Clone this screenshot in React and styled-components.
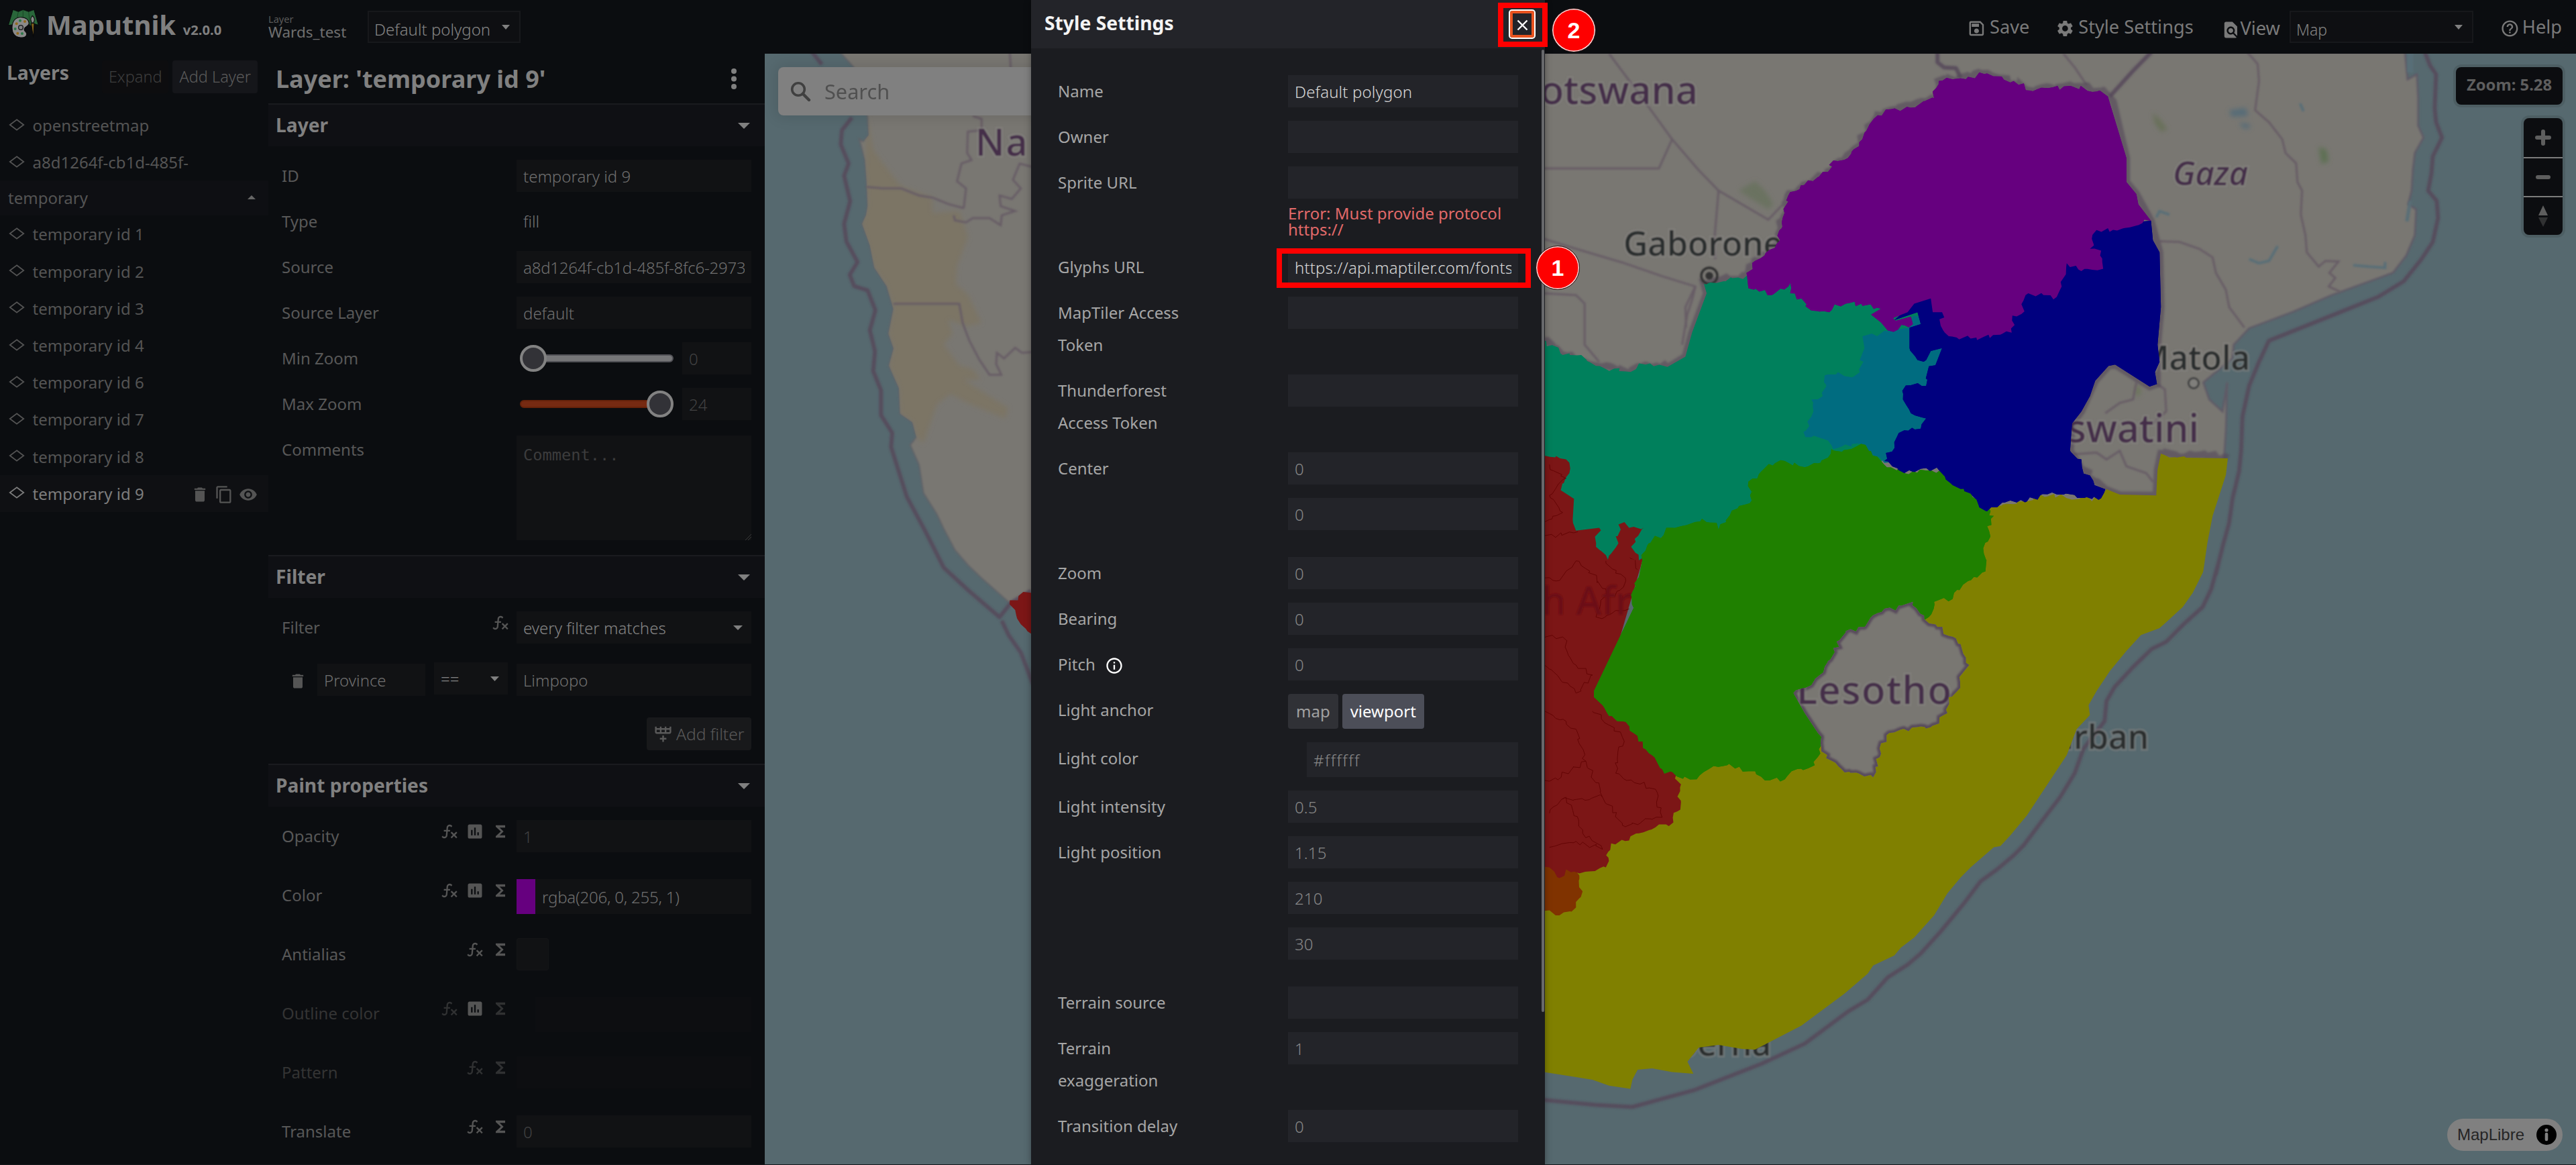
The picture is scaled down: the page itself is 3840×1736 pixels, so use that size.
import React from 'react';
import styled, { createGlobalStyle, css } from 'styled-components';
import {
  MdContentCopy,
  MdDelete,
  MdFindInPage,
  MdFunctions,
  MdHelpOutline,
  MdInfoOutline,
  MdInsertChart,
  MdOutlineSave,
  MdSettings,
  MdVisibility,
} from 'react-icons/md';

const sans = '"Noto Sans", "Open Sans", sans-serif';

const GlobalStyle = createGlobalStyle`
  * { box-sizing: border-box; }
  body { margin: 0; background: #0b0d10; overflow: hidden; font-family: ${sans}; }
  input, textarea, button { font-family: ${sans}; }
`;

/* ---------- frame ---------- */

const Shell = styled.div`
  position: relative;
  display: flex;
  flex-direction: column;
  width: 3840px;
  height: 1736px;
  overflow: hidden;
  background: #0b0d10;
  border-bottom: 1px solid #15171b;
  color: #808080;
`;

const Workspace = styled.div`
  display: flex;
  flex: 1;
  min-height: 0;
`;

/* ---------- toolbar ---------- */

const Toolbar = styled.header`
  display: flex;
  flex: 0 0 80px;
  height: 80px;
`;

const Brand = styled.div`
  display: flex;
  flex: 0 0 400px;
  align-items: flex-start;
  padding: 13px 0 0 12px;
`;

const BrandName = styled.h1`
  margin: 0 0 0 10.4px;
  font-size: 40px;
  font-weight: 700;
  line-height: 48px;
  white-space: nowrap;
`;

const Version = styled.span`
  margin-left: 10.5px;
  font-size: 20.2px;
`;

const CurrentLayer = styled.div`
  flex: 0 0 148px;
  padding-top: 19px;
  color: #6f6f6f;
  font-size: 22.5px;
  line-height: 21px;
`;

const CurrentLayerCaption = styled.div`
  color: #5a5a5a;
  font-size: 14.6px;
  line-height: 18px;
`;

const Select = styled.div`
  display: flex;
  align-items: center;
  justify-content: space-between;
  width: ${(p) => p.$width};
  height: 48px;
  margin: ${(p) => p.$margin || 0};
  padding: 0 ${(p) => p.$right || '14px'} 0 10px;
  border: ${(p) => (p.$outlined ? '2px solid #17181b' : '0')};
  padding-left: ${(p) => (p.$outlined ? '8px' : '10px')};
  background: ${(p) => (p.$outlined ? '#0e0f12' : '#111214')};
  color: #858585;
  font-size: ${(p) => p.$size || '24px'};
  font-weight: 300;
  line-height: 48px;
`;

const SelectText = styled.span`
  position: relative;
  top: ${(p) => p.$drop || '1px'};
  white-space: nowrap;
`;

const Actions = styled.nav`
  display: flex;
  align-items: flex-start;
  margin-left: auto;
  padding-right: 21px;
`;

const Action = styled.div`
  display: flex;
  align-items: center;
  height: 80px;
  margin-left: ${(p) => p.$before || 0};
  padding-top: ${(p) => p.$drop || 0};
  color: #7a7a7a;
  font-size: 27.2px;
  line-height: 40px;
  white-space: nowrap;

  svg { width: 28.8px; height: 28.8px; margin: ${(p) => p.$iconMargin || '4px 5px 0 0'}; }
`;

/* ---------- layer list ---------- */

const LayerList = styled.aside`
  flex: 0 0 400px;
`;

const ListHeader = styled.div`
  display: flex;
  align-items: flex-start;
  height: 79px;
  padding: 10px 16px 0 10px;
`;

const ListTitle = styled.h2`
  margin: -3px auto 0 0;
  font-size: 28.4px;
  font-weight: 700;
  line-height: 42px;
`;

const SmallButton = styled.button`
  height: 49px;
  margin-left: 6px;
  padding: 0 10px;
  border: 0;
  border-radius: 4px;
  background: ${(p) => (p.$quiet ? '#0d0d0f' : '#15161a')};
  color: ${(p) => (p.$quiet ? '#3e3e3e' : '#5c5c5c')};
  font-size: 23.5px;
  font-weight: 300;
  line-height: 49px;
`;

const LayerRow = styled.div`
  display: flex;
  align-items: center;
  height: 55.2px;
  padding: 0 16px 2px 13px;
  background: ${(p) => (p.$active ? '#0f1013' : 'transparent')};
  color: ${(p) => (p.$active ? '#7d7d7d' : '#545454')};
  font-size: 24px;
`;

const LayerName = styled.span`
  flex: 1;
  margin-left: 11.5px;
  padding-top: 2px;
`;

const LayerTools = styled.div`
  display: flex;
  gap: 8px;
  padding-top: 6px;
  color: #545454;

  svg { width: 28px; height: 28px; }
`;

const LayerGroup = styled.div`
  display: flex;
  align-items: center;
  justify-content: space-between;
  height: 52px;
  padding: 0 19px 2px 12px;
  background: #0e0f13;
  color: #545454;
  font-size: 24px;
`;

/* ---------- layer editor ---------- */

const Editor = styled.section`
  flex: 0 0 740px;
  overflow: hidden;
`;

const EditorHeader = styled.div`
  display: flex;
  align-items: center;
  justify-content: space-between;
  height: 74px;
  padding: 0 42px 0 11px;
`;

const EditorTitle = styled.h2`
  margin: 2px 0 0;
  font-size: 36px;
  font-weight: 700;
  line-height: 50px;
`;

const SectionHeader = styled.div`
  display: flex;
  align-items: center;
  justify-content: space-between;
  height: 64px;
  padding: 0 22px 0 11px;
  border-top: 2px solid #1a1b1f;
  background: #0f1014;
`;

const SectionTitle = styled.h3`
  margin: -3px 0 0;
  font-size: 28.2px;
  font-weight: 700;
  line-height: 40px;
`;

const SectionBody = styled.div`
  display: flex;
  flex-direction: column;
  gap: ${(p) => p.$gap || '20px'};
  padding: 20px 20px ${(p) => p.$bottom || '20px'};
`;

const Field = styled.div`
  display: flex;
  align-items: flex-start;
  height: ${(p) => p.$height || '48px'};
`;

const FieldLabel = styled.div`
  flex: 1;
  color: ${(p) => (p.$disabled ? '#343434' : '#585858')};
  font-size: 24px;
  line-height: 48px;
`;

const FieldIcons = styled.div`
  display: flex;
  gap: 10px;
  padding: 3px 10px 0 0;
  color: #555;

  svg { width: 28px; height: 28px; }
`;

const IconSlot = styled.span`
  display: flex;
  opacity: ${(p) => (p.$dim ? 0.5 : 1)};
`;

const Control = styled.div`
  display: flex;
  flex: 0 0 350px;
`;

const inputBase = css`
  border: 0;
  border-radius: 0;
  outline: 0;
  font-size: 24px;
  font-weight: 300;
  line-height: 46px;
`;

const Input = styled.input`
  ${inputBase}
  flex: ${(p) => (p.$width ? '0 0 ' + p.$width : '1')};
  width: ${(p) => p.$width || '100%'};
  min-width: 0;
  height: ${(p) => p.$height || '48px'};
  margin: ${(p) => p.$margin || 0};
  padding: 0 10px;
  background: ${(p) => (p.$faint ? '#0d0e11' : '#111214')};
  color: #707070;
  letter-spacing: ${(p) => p.$spacing || 'normal'};

  &::placeholder { color: #424243; opacity: 1; }
`;

const StaticValue = styled.div`
  padding-left: 10px;
  color: #727272;
  font-size: 24px;
  font-weight: 300;
  line-height: 47px;
`;

const Comment = styled.textarea`
  ${inputBase}
  width: 350px;
  height: 156px;
  margin-top: 3px;
  padding: 15px 10px;
  background: #111214;
  font-family: "DejaVu Sans Mono", monospace;
  font-size: 23.7px;
  font-weight: 400;
  line-height: 28px;
  resize: none;

  &::placeholder { color: #3c3c3d; opacity: 1; }
`;

const CommentBox = styled.div`
  position: relative;
  height: 159px;
`;

const ResizeGrip = styled.svg`
  position: absolute;
  right: 0;
  bottom: 0;
  width: 10px;
  height: 10px;
`;

const Slider = styled.div`
  position: relative;
  width: 229px;
  height: 48px;
  margin: 0 13px 0 5px;
  padding-top: 18px;
`;

const Track = styled.div`
  height: 12px;
  border: 2px solid ${(p) => (p.$hot ? '#66220a' : '#515156')};
  border-radius: 6px;
  background: ${(p) => (p.$hot ? '#762a12' : '#767678')};
`;

const Thumb = styled.div`
  position: absolute;
  top: 4px;
  ${(p) => (p.$end ? 'right: 0;' : 'left: 0;')}
  width: 40px;
  height: 40px;
  border: 4px solid #828282;
  border-radius: 50%;
  background: #323237;
`;

const FilterRow = styled.div`
  display: flex;
  align-items: center;
  height: 48px;
  margin-top: 12px;
  color: #555;

  svg.trash { width: 28px; height: 28px; margin: 4px 15px 0 10px; }
`;

const AddFilter = styled.button`
  display: flex;
  align-items: center;
  align-self: flex-end;
  width: 156px;
  height: 49px;
  margin-top: 14px;
  padding: 0 0 0 10px;
  border: 0;
  border-radius: 4px;
  background: #18191b;
  color: #5a5a5a;
  font-size: 24.6px;
  font-weight: 300;
  gap: 5px;
  white-space: nowrap;

  svg { flex: none; width: 29px; height: 29px; }
`;

const Swatch = styled.div`
  width: 28px;
  height: 52px;
  background: ${(p) => p.$color};
`;

const Checkbox = styled.div`
  width: 48px;
  height: 48px;
  border: 1px solid #141517;
  border-radius: 3px;
  background: #111214;
`;

/* ---------- map ---------- */

const MapPane = styled.main`
  position: relative;
  flex: 1;
  overflow: hidden;
  background: #56696f;
`;

const MapCanvas = styled.svg`
  display: block;
`;

const SearchBox = styled.div`
  position: absolute;
  left: 20px;
  top: 20px;
  display: flex;
  align-items: center;
  width: 480px;
  height: 72px;
  padding-left: 18px;
  border-radius: 8px;
  background: #808080;
  box-shadow: 0 0 20px 4px rgba(0, 0, 0, 0.1);
  color: #505050;
  font-size: 30.7px;
  gap: 20px;
`;

const controlSurface = css`
  border-radius: 8px;
  background: #0c0d10;
  box-shadow: 0 0 0 4px rgba(0, 0, 0, 0.1);
`;

const MapControls = styled.div`
  position: absolute;
  top: 20px;
  right: 20px;
  display: flex;
  flex-direction: column;
  align-items: flex-end;
  gap: 20px;
`;

const ZoomBadge = styled.div`
  ${controlSurface}
  width: 159px;
  height: 56px;
  color: #5e5e5e;
  font-size: 23.8px;
  font-weight: 700;
  line-height: 53px;
  text-align: center;
`;

const NavGroup = styled.div`
  ${controlSurface}
  width: 58px;
`;

const NavButton = styled.div`
  display: flex;
  align-items: center;
  justify-content: center;
  height: 58px;

  & + & { border-top: 2px solid #7c7c7c; }
`;

const Attribution = styled.div`
  position: absolute;
  right: 20px;
  bottom: 20px;
  display: flex;
  align-items: center;
  justify-content: space-between;
  width: 172px;
  height: 48px;
  padding: 0 8px 0 15px;
  border-radius: 24px;
  background: #808080;
  color: #252525;
  font-family: "Liberation Sans", Arial, sans-serif;
  font-size: 24px;

  svg { width: 32px; height: 32px; }
`;

/* ---------- settings dialog ---------- */

const Dialog = styled.section`
  position: absolute;
  left: 1537px;
  top: 0;
  width: 766px;
  height: 1736px;
  overflow: hidden;
  background: #1b1c20;
`;

const DialogShade = styled.div`
  position: absolute;
  left: 1537px;
  top: 0;
  width: 766px;
  height: 1736px;
  box-shadow: 0 0 10px 0 rgba(0, 0, 0, 0.35);
`;

const DialogHeader = styled.div`
  display: flex;
  align-items: center;
  justify-content: space-between;
  height: 72px;
  padding: 0 14px 0 20px;
  background: #232429;
  color: #f4f4f4;
`;

const DialogTitle = styled.h2`
  margin: -4px 0 0;
  font-size: 28.3px;
  font-weight: 700;
  line-height: 40px;
`;

const CloseButton = styled.button`
  display: flex;
  align-items: center;
  justify-content: center;
  width: 40px;
  height: 44px;
  padding: 2px 0 0;
  border: 2px solid #fff;
  border-radius: 5px;
  background: #232429;
  box-shadow: inset 0 0 0 4px #e95420;
`;

const DialogBody = styled.div`
  display: flex;
  flex-direction: column;
  gap: 20px;
  padding: 40px 40px 0;
`;

const Setting = styled.div`
  display: flex;
  align-items: flex-start;
  justify-content: space-between;
`;

const SettingLabel = styled.label`
  display: block;
  flex: 0 0 215px;
  color: #a6a6a6;
  font-size: 24px;
  line-height: 48px;

  svg { width: 28px; height: 28px; margin: -4px 0 -7px 14px; color: #fff; }
`;

const SettingControl = styled.div`
  display: flex;
  flex: 0 0 343px;
  flex-direction: ${(p) => (p.$inline ? 'row' : 'column')};
  gap: ${(p) => (p.$inline ? '6px' : '20px')};
  margin-bottom: ${(p) => p.$after || 0};
`;

const SettingInput = styled.input`
  ${inputBase}
  width: ${(p) => p.$width || '343px'};
  height: ${(p) => p.$height || '48px'};
  margin-left: auto;
  padding: 0 10px;
  background: #232429;
  color: #d8d8d8;
  letter-spacing: ${(p) => p.$spacing || '0.14px'};

  &::placeholder { color: #888; opacity: 1; }
`;

const Choice = styled.button`
  height: 52px;
  padding: 0 12px 1px;
  border: 0;
  border-radius: 4px;
  background: ${(p) => (p.$on ? '#4c4e58' : '#303136')};
  color: ${(p) => (p.$on ? '#fff' : '#a2a2a2')};
  font-size: 24px;
  white-space: nowrap;
`;

const ErrorText = styled.p`
  width: 343px;
  margin: -10px 0 0 auto;
  color: #e26a6a;
  font-size: 24px;
  line-height: 24px;
`;

const ScrollThumb = styled.div`
  position: absolute;
  top: 74px;
  right: 1px;
  width: 4px;
  height: 1434px;
  border-radius: 2px;
  background: #67686b;
`;

/* ---------- walkthrough marks ---------- */

const Highlight = styled.div`
  position: absolute;
  left: ${(p) => p.$x}px;
  top: ${(p) => p.$y}px;
  width: ${(p) => p.$w}px;
  height: ${(p) => p.$h}px;
  border: 8px solid #fe0000;
`;

const StepBadge = styled.div`
  position: absolute;
  left: ${(p) => p.$x - 33}px;
  top: ${(p) => p.$y - 33}px;
  width: 66px;
  height: 66px;
  border: 1px solid #222;
  border-radius: 50%;
  background: #fe0000;
  box-shadow: inset 0 0 0 1.5px #f3e9e9;
  color: #fff;
  font-family: "Liberation Sans", Arial, sans-serif;
  font-size: 34px;
  font-weight: 700;
  line-height: 64px;
  text-align: center;
`;

/* ---------- small drawings ---------- */

const Caret = ({ w = 12, h = 7, up, color = '#808080' }) => (
  <svg width={w} height={h} viewBox="0 0 12 7" preserveAspectRatio="none">
    <path d={up ? 'M0 7L6 0L12 7Z' : 'M0 0L6 7L12 0Z'} fill={color} />
  </svg>
);

const Logo = () => (
  <svg width="46.7" height="43.4" viewBox="36 9 140 130">
    <g stroke="#08090a" strokeWidth="3" strokeLinejoin="round">
      <path d="M58 13L82 22L103 13L128 22L152 13L172 82L152 76L136 86L110 60L80 56L60 80L37 83Z" fill="#29663a" />
      <path d="M82 22L76 52M103 13V46M128 22L134 80" fill="none" stroke="#123319" strokeWidth="2" />
      <path
        d="M92 47C116 46 131 60 129 76C127 90 108 88 108 101C108 112 121 112 119 124C117 136 104 139 92 138C68 136 54 120 54 94C54 66 68 47 92 47Z"
        fill="#8a8a8a"
      />
      <circle cx="93" cy="93" r="10" fill="#808080" stroke="#15171a" strokeWidth="4" />
      <path d="M139 74L153 74L149 138Z" fill="#83621d" />
      <path d="M145 40C140 46 136 52 138 60L142 72H150L154 60C155 52 151 46 145 40Z" fill="#888" />
    </g>
    <g fill="#2a7a48">
      <circle cx="90" cy="62" r="6" />
      <circle cx="68" cy="99" r="6" />
      <circle cx="99" cy="120" r="6" />
    </g>
    <g fill="#93691c">
      <circle cx="111" cy="66" r="6" />
      <circle cx="74" cy="76" r="6" />
      <circle cx="79" cy="119" r="6" />
    </g>
  </svg>
);

const Diamond = () => (
  <svg width="24" height="18" viewBox="0 0 24 18">
    <path d="M12 1.3L22.2 9L12 16.7L1.8 9Z" fill="none" stroke="currentColor" strokeWidth="1.8" />
  </svg>
);

const Kebab = () => (
  <svg width="8" height="31" viewBox="0 0 8 31">
    {[4, 15.5, 27].map((y) => (
      <circle key={y} cx="4" cy={y} r="4" fill="#808080" />
    ))}
  </svg>
);

const FxIcon = () => (
  <svg viewBox="0 0 24 24" fill="currentColor">
    <path d="M12.42,5.29C11.32,5.19 10.35,6 10.25,7.11L10,10H12.82V12H9.82L9.38,17.07C9.18,19.27 7.24,20.9 5.04,20.7C3.79,20.59 2.66,19.9 2,18.83L3.5,17.33C3.83,18.38 4.96,18.97 6,18.63C6.78,18.39 7.33,17.7 7.4,16.89L7.82,12H4.82V10H8L8.27,6.93C8.46,4.73 10.39,3.1 12.6,3.28C13.86,3.39 15,4.09 15.66,5.17L14.16,6.67C13.91,5.9 13.23,5.36 12.42,5.29M22,13.65L20.59,12.24L17.76,15.07L14.93,12.24L13.5,13.65L16.35,16.5L13.5,19.31L14.93,20.72L17.76,17.89L20.59,20.72L22,19.31L19.17,16.5L22,13.65Z" />
  </svg>
);

const RowPlusIcon = () => (
  <svg viewBox="0 0 24 24" fill="currentColor">
    <path d="M22,10A2,2 0 0,1 20,12H4A2,2 0 0,1 2,10V3H4V5H8V3H10V5H14V3H16V5H20V3H22V10M4,10H8V7H4V10M10,10H14V7H10V10M20,10V7H16V10H20M11,14H13V17H16V19H13V22H11V19H8V17H11V14Z" />
  </svg>
);

const SearchIcon = () => (
  <svg width="31" height="31" viewBox="0 0 31 31" fill="none" stroke="#404040">
    <circle cx="12" cy="12" r="9.3" strokeWidth="3.6" />
    <path d="M18.8 18.8L28 28" strokeWidth="4.4" strokeLinecap="round" />
  </svg>
);

/* ---------- map geometry ---------- */

// Three survey sheets share one canvas: N and S cover the east, W the Atlantic coast.
const sheets = {
  N: (x, y) => [2290 + x / 1.01161 - 1140, y / 1.96],
  S: (x, y) => [2290 + x / 1.01161 - 1140, 720 + y / 1.6752],
  W: (x, y) => [1130 + x / 3 - 1140, y / 0.94686],
};

// "~" before a point frays the border that leads to it.
function trace(text, close) {
  let sheet = 'N';
  let seed = text.length;
  let last = null;
  const out = [];
  const noise = () => {
    seed = (seed * 16807) % 2147483647;
    return seed / 2147483647 - 0.5;
  };
  const fray = (a, b) => {
    const length = Math.hypot(b[0] - a[0], b[1] - a[1]);
    const steps = Math.floor(length / 6);
    for (let i = 1; i < steps; i += 1) {
      const t = i / steps;
      out.push([a[0] + (b[0] - a[0]) * t + noise() * 8, a[1] + (b[1] - a[1]) * t + noise() * 8]);
    }
  };
  text.trim().split(/\s+/).forEach((token) => {
    if (sheets[token]) {
      sheet = token;
      return;
    }
    const rough = token[0] === '~';
    const [x, y] = (rough ? token.slice(1) : token).split(',').map(Number);
    const point = sheets[sheet](x, y);
    if (rough && last) fray(last, point);
    out.push(point);
    last = point;
  });
  return 'M' + out.map((p) => p[0].toFixed(1) + ' ' + p[1].toFixed(1)).join('L') + (close ? 'Z' : '');
}

const westLand =
  'W 358,-5 430,20 470,60 490,90 495,115 470,124 452,120 478,150 485,180 490,215 483,228 465,240 500,270 520,302 575,328 605,360 583,395 606,416 585,440 630,472 635,508 690,520 708,541 680,552 720,580 740,620 800,650 830,670 880,700 940,722 1000,740 1125,775 1300,760 1300,-5';
const eastLand =
  'N -60,-5 1310,-5 1314,75 1328,60 1330,130 1330,210 1338,245 1325,290 1322,340 1320,400 1315,440 1327,455 1325,530 1312,590 1292,640 1200,705 1140,755 1075,802 1052,850 1050,890 1006,960 1015,1010 1035,1045 1042,960 1040,1100 1037,1190 800,1500 -60,1500';
const desert =
  'W 490,88 515,135 560,155 640,187 780,203 780,225 900,222 940,258 890,300 885,325 940,340 1000,380 930,385 850,375 870,395 830,410 900,440 960,445 995,460 920,460 1120,500 1105,515 930,492 860,480 800,495 740,550 708,541 690,520 635,508 630,472 585,440 606,416 583,395 605,360 575,328 520,302 465,240 490,215 480,150 485,110';
const provinceLines = [
  'W 485,188 560,190 640,190 720,200 780,203 850,212 920,218',
  'W 605,353 900,353 915,380 945,405 990,432 1035,453 1088,453 1065,438 1068,422 1100,430 1150,415 1180,422 1230,421',
  'W 920,218 930,190 890,180 910,155 955,150 935,140 938,110 1000,108 1000,92 960,88',
  'W 1230,160 1170,155 1140,178 1175,190 1135,205 1080,200 1085,215 1150,222 1090,228 1085,242 1035,232 960,232 930,238 880,235 875,228',
  'W 1125,-5 1130,20',
  'N 110,0 160,130 205,250 245,340 275,400 350,485 372,440',
  'N 205,250 185,335 10,335',
  'N 275,400 268,560 270,600',
  'N 10,540 60,570 130,610 190,650 240,680 235,720 228,760 220,850',
  'N 240,680 225,740 226,800',
  'N 10,700 60,705 73,730 73,850 95,900',
  'N 795,0 812,40 830,92',
  'N 1072,-5 1088,30 1090,80 1084,165 1105,200 1125,250 1130,290 1146,320 1148,375 1155,400 1153,470 1160,530 1162,580 1180,622 1190,605 1210,607 1196,640 1205,655 1195,680 1212,695',
  'N 940,548 970,550 1000,570 1020,595 1025,640 1040,690 1045,740 1068,800',
  'N 936,965 948,980 950,1045 930,1080',
  'N 905,960 900,1010 880,1020 858,1050',
  'N 810,1170 845,1165 860,1185 880,1160 890,1205 920,1225 930,1250',
];
const coastLines = [
  'W 235,-5 285,15',
  'W 420,90 375,108 370,128 405,155 385,172 412,208 385,240 395,265 445,294 410,312 430,328 490,334 525,362 500,390 523,420 515,448 550,475 550,510 600,535 595,555 665,625 750,675 830,725 940,757 1080,795 1130,775 1220,758',
  'W 1090,800 1120,820 1175,845 1230,890',
  'N 1340,-5 1348,35 1357,60 1355,160 1357,200 1366,245 1352,300 1350,350 1345,400 1358,430 1360,480 1352,550 1335,600 1308,665 1270,710 1225,745 1105,838 1090,900 1075,970 1065,1060 1063,1160 1060,1220 1050,1300 1045,1370 1035,1440 1025,1520 S 1028,70 1018,130 1005,175 975,220 950,262 928,280 900,325 872,375 860,410 857,460 825,530 812,590 790,650 760,715 735,770 720,795 695,830 670,860 645,915 610,985 580,1040 560,1068 530,1100 500,1155 470,1185 405,1265 340,1315 240,1380 145,1423 90,1418 -10,1402',
  'N 605,-5 605,25 615,40 633,42 640,70',
  'N 928,-5 900,50 865,125',
];
const frontier =
  'N 0,820 ~40,880 ~90,912 ~135,930 ~165,910 ~198,917 225,885 235,815 257,700 253,672 ~318,650 ~330,605 ~360,567 ~370,510 ~380,415 ~440,345 ~487,270 ~515,180 ~600,130 ~607,80 ~680,58 ~745,108 ~810,97 ~855,108 870,140 890,305 890,375 905,410 927,488 940,580 942,740 937,850 936,965 925,972 873,908 863,912 843,955 822,1045 808,1080 805,1160 ~824,1215 ~858,1272 880,1289 935,1290 937,1215 942,1168 ~1043,1182';

const provinces = [
  {
    fill: '#808000',
    d: 'N 680,1330 ~740,1308 ~760,1288 ~848,1303 860,1272 880,1288 935,1290 937,1215 942,1168 ~980,1180 1043,1182 1040,1230 1030,1290 1020,1350 1012,1430 1006,1510 S 1005,90 990,140 975,175 940,228 912,245 890,285 865,335 845,385 833,420 835,445 815,480 800,545 780,595 762,640 740,695 715,745 700,772 690,775 655,825 640,850 620,890 600,945 570,1000 550,1025 540,1045 508,1070 500,1090 465,1140 400,1220 330,1280 310,1278 275,1268 245,1275 228,1310 237,1340 205,1336 175,1327 153,1330 145,1355 142,1378 110,1370 85,1355 -30,1325 -30,900 60,700 100,600 400,500 N 500,1400',
  },
  {
    fill: '#803300',
    d: 'S -30,800 60,820 ~65,845 ~70,885 ~60,925 ~35,945 ~20,932 -30,940',
  },
  {
    fill: '#7c1616',
    d: 'N -30,1150 60,1150 200,1370 S 160,60 100,400 212,590 ~217,635 ~213,685 ~200,722 ~180,725 ~155,740 ~140,758 ~113,765 ~105,825 ~80,835 ~65,840 ~45,830 ~35,852 ~20,825 -30,815',
  },
  {
    fill: '#00805c',
    d: 'N -30,800 15,840 ~40,880 ~68,880 ~90,912 ~135,928 ~165,908 ~198,915 225,885 235,815 257,700 253,672 ~318,648 400,600 500,650 590,740 590,900 520,1195 300,1400 205,1390 ~155,1480 ~143,1440 ~162,1385 ~140,1385 ~133,1368 ~124,1375 ~124,1430 ~108,1478 ~90,1440 ~95,1385 60,1393 ~55,1360 57,1300 37,1275 ~50,1225 ~45,1185 ~15,1175 -30,1165',
  },
  {
    fill: '#006c80',
    d: 'N 492,825 ~530,810 562,800 568,765 578,768 640,860 620,900 600,1180 525,1195 ~510,1175 490,1140 ~448,1155 ~440,1130 ~415,1120 ~403,1105 ~415,1060 ~415,1010 ~432,1000 ~435,940 ~455,930 ~465,942 ~488,930 ~495,860',
  },
  {
    fill: '#1f8000',
    d: 'N 160,1480 ~170,1430 ~205,1385 ~250,1358 ~272,1370 ~275,1390 ~295,1335 ~325,1305 ~320,1250 ~345,1210 ~375,1190 ~405,1208 ~440,1180 ~445,1155 ~475,1155 ~490,1140 ~520,1190 ~555,1225 ~608,1218 ~655,1280 ~690,1350 ~680,1380 ~685,1410 ~675,1460 ~678,1500 ~665,1530 S ~660,100 ~630,140 ~628,155 ~600,162 ~592,200 500,300 430,520 ~420,570 ~385,585 ~375,605 ~345,608 ~320,585 ~288,570 ~260,580 ~242,605 ~212,598 ~190,580 ~165,530 ~135,462 ~122,460 ~100,420 87,400 87,385 147,177 ~143,145 ~155,100',
  },
  {
    fill: '#00007f',
    d: 'N 927,488 930,545 940,580 942,740 937,850 940,900 933,930 936,965 925,972 873,908 863,912 843,955 835,1000 822,1045 808,1080 805,1160 ~822,1185 ~824,1215 ~842,1260 858,1272 ~848,1303 ~830,1295 ~795,1288 ~760,1290 ~740,1308 ~715,1305 ~695,1325 ~680,1337 ~668,1325 ~655,1285 ~625,1255 ~608,1218 ~580,1212 ~555,1225 ~525,1190 ~540,1135 ~555,1100 ~580,1095 ~588,1065 ~565,1050 ~553,1010 ~552,985 ~565,968 ~588,970 ~590,930 ~602,910 612,860 595,868 588,895 ~575,895 ~563,860 563,800 580,790 575,755 540,778 560,745 ~580,715 650,700 850,500',
  },
  {
    fill: '#66007f',
    d: 'N 318,650 ~330,605 ~360,567 ~370,510 ~380,415 ~410,370 ~440,345 ~448,312 ~470,305 ~487,270 ~498,225 ~515,180 ~535,162 ~565,158 ~600,130 ~607,80 ~640,72 ~680,58 ~720,80 ~745,108 ~810,97 ~850,108 862,125 890,305 890,375 905,410 908,440 927,488 ~885,510 ~845,515 ~835,570 ~852,575 ~855,628 ~822,635 ~800,612 ~795,655 ~780,718 ~765,705 ~738,705 ~732,760 ~718,765 ~717,815 ~655,832 ~622,825 ~610,795 ~612,755 598,755 595,715 570,730 560,755 538,772 542,780 565,768 568,790 ~530,808 520,785 505,762 520,745 ~490,730 ~450,732 ~442,755 ~415,750 ~400,715 ~383,700 ~383,670 ~355,705 ~345,690 ~320,685',
  },
];

const wardLines = [
  'S -20,80 ~30,110 ~60,60 ~105,130 ~90,200 ~140,180',
  'S -20,260 ~40,250 ~60,320 ~85,345 ~60,390 ~20,330 ~-10,300',
  'S 10,430 ~60,480 ~75,560 ~20,610 ~-10,560',
  'S 85,435 ~130,500 ~120,590 ~180,630 ~190,700 ~130,720 ~100,650 ~75,560',
  'S 20,690 ~45,650 ~70,740 ~100,780 ~60,760 ~20,775',
  'S 40,655 ~100,650',
  'S 105,60 ~135,110 ~118,150',
  'N 10,1412 ~90,1385',
  'N 20,1200 ~45,1240 ~20,1290 ~40,1340 ~10,1370',
  'N 150,1390 ~135,1450 ~160,1530',
];

const lesotho = trace(
  'S 568,162 ~585,205 ~605,225 ~640,268 ~653,320 ~638,350 ~635,385 ~622,400 ~620,440 ~595,475 ~540,488 ~520,515 ~518,550 ~508,600 ~495,598 ~465,588 ~430,535 ~425,490 405,440 388,390 ~415,370 ~440,310 ~467,235 ~495,225 ~515,190 ~550,172',
  true,
);

const MapLabel = styled.text`
  font-family: ${sans};
  font-size: ${(p) => p.$size}px;
  font-style: ${(p) => (p.$italic ? 'italic' : 'normal')};
  font-weight: 500;
  fill: ${(p) => (p.$country ? '#452f49' : '#2c2d2d')};
  stroke: rgba(136, 134, 130, 0.45);
  stroke-width: 6px;
  paint-order: stroke;
  letter-spacing: ${(p) => p.$spacing || 0}px;
`;

const RegionMap = () => (
  <MapCanvas width="2700" height="1656" viewBox="0 0 2700 1656">
    <defs>
      <filter id="soft" x="-5%" y="-5%" width="110%" height="110%">
        <feGaussianBlur stdDeviation="1.4" />
      </filter>
      <filter id="haze" x="-10%" y="-10%" width="120%" height="120%">
        <feGaussianBlur stdDeviation="3.5" />
      </filter>
      <filter id="tile" x="-5%" y="-5%" width="110%" height="110%">
        <feGaussianBlur stdDeviation="0.9" />
      </filter>
      <clipPath id="enclave">
        <path d={lesotho} />
      </clipPath>
      <clipPath id="west">
        <path d={trace(westLand, true)} />
      </clipPath>
      <clipPath id="karoo">
        <path d={trace('N -30,1180 45,1190 57,1300 60,1393 150,1480 S 155,100 147,177 87,385 212,598 200,722 105,825 -30,815', true)} />
      </clipPath>
    </defs>
    <g filter="url(#soft)">
      <path d={trace(westLand, true)} fill="#797772" stroke="#5f6066" strokeWidth="2" />
      <path d={trace(eastLand, true)} fill="#797772" stroke="#5f5a66" strokeWidth="3" />
    </g>
    <g clipPath="url(#west)">
      <path d={trace(desert, true)} fill="#7c7465" filter="url(#haze)" />
    </g>
    <g filter="url(#haze)">
      <path d={trace('N 305,400 330,372 345,400 358,440 350,455 325,425', true)} fill="#6b7260" />
      <path d={trace('N 930,172 942,195 952,222 942,228 932,200', true)} fill="#677058" />
      <path d={trace('N 1180,272 1192,280 1195,315 1184,322', true)} fill="#5d6f52" />
      <path d={trace('N 905,965 912,980 910,1000 903,995', true)} fill="#6b7558" />
      <path d={trace('N 1045,165 1070,158 1074,182 1048,184', true)} fill="#566c77" />
      <path d={trace('N 1060,202 1075,205 1077,218 1066,218', true)} fill="#566c77" />
    </g>
    <g fill="none" stroke="#596e77" strokeWidth="4" filter="url(#soft)">
      <path d={trace('N 1152,145 1157,168')} />
      <path d={trace('N 1075,600 1090,612 1105,605 1118,562')} />
      <path d={trace('N 935,478 940,460 955,470')} />
      <path d={trace('N 1232,618 1255,622 1280,625 1280,608')} />
      <path d={trace('N 1318,-5 1318,55')} strokeWidth="9" />
      <path d={trace('N 1318,430 1313,490')} strokeWidth="5" />
    </g>
    <g fill="none" stroke="#665b65" strokeWidth="3" filter="url(#soft)">
      {provinceLines.map((line) => (
        <path key={line} d={trace(line)} />
      ))}
    </g>
    <g fill="none" stroke="#55485a" strokeWidth="6" strokeLinejoin="round" filter="url(#soft)">
      {coastLines.map((line) => (
        <path key={line} d={trace(line)} opacity="0.85" />
      ))}
    </g>
    <g fill="none" stroke="#55485a" strokeWidth="11" opacity="0.6" filter="url(#soft)">
      <path d={trace(frontier)} />
    </g>

    <g filter="url(#tile)">
      <MapLabel $country $size={58} x="1391" y="75" textAnchor="end">Botswana</MapLabel>
      <MapLabel $country $size={56} x="314" y="152" $spacing={2}>Na</MapLabel>
      <MapLabel $country $italic $size={49} x="2099" y="196">Gaza</MapLabel>
      <MapLabel $size={50} x="1280" y="301">Gaborone</MapLabel>
      <MapLabel $size={50} x="2214" y="471" textAnchor="end">Matola</MapLabel>
      <MapLabel $country $size={57.5} x="2138" y="579" textAnchor="end">Eswatini</MapLabel>
      <MapLabel $size={50} x="2063" y="1036" textAnchor="end">Durban</MapLabel>
      <MapLabel $size={50} x="1500" y="1493" textAnchor="end">Gqeberha</MapLabel>
      <g fill="none" stroke="#333" strokeWidth="3.5">
        <circle cx="1408" cy="331" r="12" />
        <circle cx="1408" cy="331" r="4" fill="#333" />
        <circle cx="2130" cy="491" r="7.5" stroke="#444" strokeWidth="3" fill="#807f7b" />
      </g>
    </g>

    {provinces.map((p) => (
      <path key={p.fill} d={trace(p.d, true)} fill={p.fill} />
    ))}
    <path d={trace('W 1125,777 ~1165,765 ~1205,760 1260,762 1260,835 ~1205,815 ~1175,805 ~1150,785', true)} fill="#7c1616" />
    <g clipPath="url(#karoo)" fill="none" stroke="#640505" strokeWidth="1">
      {wardLines.map((line) => (
        <path key={line} d={trace(line)} />
      ))}
      <text x="1158" y="836" fontFamily={sans} fontSize="58" fontWeight="500" fill="#6c0d14" stroke="none" filter="url(#tile)">h Afr</text>
    </g>
    <path d={trace(provinces[5].d, true)} fill={provinces[5].fill} />
    <path d={trace(provinces[6].d, true)} fill={provinces[6].fill} />
    <path d={trace(provinces[7].d, true)} fill={provinces[7].fill} />

    <path d={lesotho} fill="#797772" />
    <g clipPath="url(#enclave)">
      <path d={lesotho} fill="none" stroke="#584c5c" strokeWidth="8" filter="url(#soft)" />
      <g filter="url(#tile)">
        <MapLabel $country $size={58} $spacing={1.5} x="1538" y="969">Lesotho</MapLabel>
      </g>
    </g>
  </MapCanvas>
);

/* ---------- content ---------- */

const Name = ({ children, active }) => (
  <LayerRow $active={active}>
    <Diamond />
    <LayerName>{children}</LayerName>
    {active && (
      <LayerTools>
        <MdDelete />
        <MdContentCopy />
        <MdVisibility />
      </LayerTools>
    )}
  </LayerRow>
);

const PaintIcons = ({ set, dim }) => (
  <FieldIcons>
    {set.includes('f') && <IconSlot $dim={dim}><FxIcon /></IconSlot>}
    {set.includes('c') && <IconSlot><MdInsertChart /></IconSlot>}
    {set.includes('s') && <IconSlot $dim={dim}><MdFunctions /></IconSlot>}
  </FieldIcons>
);

const Section = ({ title }) => (
  <SectionHeader>
    <SectionTitle>{title}</SectionTitle>
    <Caret w={18} h={9} />
  </SectionHeader>
);

const layersTop = ['openstreetmap', 'a8d1264f-cb1d-485f-'];
const layersGroup = [1, 2, 3, 4, 6, 7, 8];

const settings = [
  { label: 'Name', value: 'Default polygon' },
  { label: 'Owner' },
  { label: 'Sprite URL' },
  { error: 'Error: Must provide protocol https://' },
  { label: 'Glyphs URL', value: 'https://api.maptiler.com/fonts' },
  { label: 'MapTiler Access Token' },
  { label: 'Thunderforest Access Token' },
  { label: 'Center', hints: ['0', '0'] },
  { label: 'Zoom', hints: ['0'] },
  { label: 'Bearing', hints: ['0'] },
  { label: 'Pitch', hints: ['0'], info: true },
  { label: 'Light anchor', choices: ['map', 'viewport'] },
  { label: 'Light color', hints: ['#ffffff'], color: true },
  { label: 'Light intensity', hints: ['0.5'] },
  { label: 'Light position', hints: ['1.15', '210', '30'] },
  { label: 'Terrain source' },
  { label: 'Terrain exaggeration', hints: ['1'] },
  { label: 'Transition delay', hints: ['0'] },
];

const SettingRow = ({ item }) => {
  if (item.error) return <ErrorText>{item.error}</ErrorText>;
  const hints = item.hints || [''];
  return (
    <Setting>
      <SettingLabel>
        {item.label}
        {item.info && <MdInfoOutline />}
      </SettingLabel>
      <SettingControl $inline={Boolean(item.choices)} $after={hints.length > 1 ? '20px' : 0}>
        {item.choices
          ? item.choices.map((c) => <Choice key={c} $on={c === 'viewport'}>{c}</Choice>)
          : hints.map((hint, i) => (
              <SettingInput
                key={i}
                readOnly
                value={item.value || ''}
                placeholder={hint}
                $width={item.color && '315px'}
                $height={item.color && '52px'}
                $spacing={item.color && '1.4px'}
              />
            ))}
      </SettingControl>
    </Setting>
  );
};

export default function App() {
  return (
    <>
      <GlobalStyle />
      <Shell>
        <Toolbar>
          <Brand>
            <Logo />
            <BrandName>
              Maputnik<Version>v2.0.0</Version>
            </BrandName>
          </Brand>
          <CurrentLayer>
            <CurrentLayerCaption>Layer</CurrentLayerCaption>
            Wards_test
          </CurrentLayer>
          <Select $outlined $width="228px" $margin="16px 0 0" $right="14px">
            <SelectText $drop="4px">Default polygon</SelectText>
            <Caret />
          </Select>
          <Actions>
            <Action><MdOutlineSave />Save</Action>
            <Action $before="39px"><MdSettings />Style Settings</Action>
            <Action $before="41px" $drop="4px" $iconMargin="5px 0 0 0"><MdFindInPage />View</Action>
            <Select $outlined $width="274px" $margin="16px 0 0 14px" $right="14px" $size="23px">
              <SelectText $drop="4px">Map</SelectText>
              <Caret />
            </Select>
            <Action $before="40px" $iconMargin="5px 4px 0 0"><MdHelpOutline />Help</Action>
          </Actions>
        </Toolbar>

        <Workspace>
          <LayerList>
            <ListHeader>
              <ListTitle>Layers</ListTitle>
              <SmallButton $quiet>Expand</SmallButton>
              <SmallButton>Add Layer</SmallButton>
            </ListHeader>
            {layersTop.map((n) => <Name key={n}>{n}</Name>)}
            <LayerGroup>
              temporary
              <Caret w={12} h={6} up color="#666" />
            </LayerGroup>
            {layersGroup.map((n) => <Name key={n}>{'temporary id ' + n}</Name>)}
            <Name active>temporary id 9</Name>
          </LayerList>

          <Editor>
            <EditorHeader>
              <EditorTitle>Layer: 'temporary id 9'</EditorTitle>
              <Kebab />
            </EditorHeader>

            <Section title="Layer" />
            <SectionBody $bottom="22px">
              <Field>
                <FieldLabel>ID</FieldLabel>
                <Control><Input readOnly value="temporary id 9" /></Control>
              </Field>
              <Field>
                <FieldLabel>Type</FieldLabel>
                <Control><StaticValue>fill</StaticValue></Control>
              </Field>
              <Field>
                <FieldLabel>Source</FieldLabel>
                <Control><Input readOnly value="a8d1264f-cb1d-485f-8fc6-2973" $spacing="-0.22px" /></Control>
              </Field>
              <Field>
                <FieldLabel>Source Layer</FieldLabel>
                <Control><Input readOnly value="default" /></Control>
              </Field>
              <Field>
                <FieldLabel>Min Zoom</FieldLabel>
                <Control>
                  <Slider><Track /><Thumb /></Slider>
                  <Input readOnly placeholder="0" />
                </Control>
              </Field>
              <Field>
                <FieldLabel>Max Zoom</FieldLabel>
                <Control>
                  <Slider><Track $hot /><Thumb $end /></Slider>
                  <Input readOnly placeholder="24" />
                </Control>
              </Field>
              <Field $height="159px">
                <FieldLabel>Comments</FieldLabel>
                <CommentBox>
                  <Comment readOnly placeholder="Comment..." />
                  <ResizeGrip viewBox="0 0 10 10">
                    <path d="M1 10L10 1M5 10L10 5" stroke="#3a3a3a" />
                  </ResizeGrip>
                </CommentBox>
              </Field>
            </SectionBody>

            <Section title="Filter" />
            <SectionBody $gap="18px">
              <Field>
                <FieldLabel>Filter</FieldLabel>
                <PaintIcons set="f" />
                <Control>
                  <Select $width="350px" $right="13px">
                    <SelectText>every filter matches</SelectText>
                    <Caret w={14} h={7} />
                  </Select>
                </Control>
              </Field>
              <FilterRow>
                <MdDelete className="trash" />
                <Input readOnly value="Province" $width="161px" $margin="0 13px 0 0" />
                <Select $width="110px" $margin="-4px 13px 0 0" $right="13px">
                  <SelectText>==</SelectText>
                  <Caret w={13} h={7} />
                </Select>
                <Input readOnly value="Limpopo" />
              </FilterRow>
              <AddFilter><RowPlusIcon />Add filter</AddFilter>
            </SectionBody>

            <Section title="Paint properties" />
            <SectionBody $gap="40px">
              <Field>
                <FieldLabel>Opacity</FieldLabel>
                <PaintIcons set="fcs" />
                <Control><Input readOnly placeholder="1" /></Control>
              </Field>
              <Field>
                <FieldLabel>Color</FieldLabel>
                <PaintIcons set="fcs" />
                <Control>
                  <Swatch $color="#66007f" />
                  <Input readOnly value="rgba(206, 0, 255, 1)" $height="52px" $spacing="-0.2px" />
                </Control>
              </Field>
              <Field>
                <FieldLabel>Antialias</FieldLabel>
                <PaintIcons set="fs" />
                <Control><Checkbox /></Control>
              </Field>
              <Field>
                <FieldLabel $disabled>Outline color</FieldLabel>
                <PaintIcons set="fcs" dim />
                <Control>
                  <Swatch $color="transparent" />
                  <Input readOnly $faint $height="52px" />
                </Control>
              </Field>
              <Field>
                <FieldLabel $disabled>Pattern</FieldLabel>
                <PaintIcons set="fs" dim />
                <Control><Input readOnly $faint /></Control>
              </Field>
              <Field>
                <FieldLabel>Translate</FieldLabel>
                <PaintIcons set="fs" />
                <Control><Input readOnly placeholder="0" /></Control>
              </Field>
            </SectionBody>
          </Editor>

          <MapPane>
            <RegionMap />
            <SearchBox><SearchIcon />Search</SearchBox>
            <MapControls>
              <ZoomBadge>Zoom: 5.28</ZoomBadge>
              <NavGroup>
                <NavButton>
                  <svg width="24" height="24" viewBox="0 0 24 24">
                    <path d="M12 3V21M3 12H21" stroke="#5e5e5e" strokeWidth="6" strokeLinecap="round" />
                  </svg>
                </NavButton>
                <NavButton>
                  <svg width="24" height="24" viewBox="0 0 24 24">
                    <path d="M4 12H20" stroke="#5e5e5e" strokeWidth="6" strokeLinecap="round" />
                  </svg>
                </NavButton>
                <NavButton>
                  <svg width="14" height="32" viewBox="0 0 14 32">
                    <path d="M0 15L7 0L14 15Z" fill="#5e5e5e" />
                    <path d="M0 18L7 32L14 18Z" fill="#303132" />
                  </svg>
                </NavButton>
              </NavGroup>
            </MapControls>
            <Attribution>
              MapLibre
              <svg viewBox="0 0 32 32">
                <circle cx="16" cy="16" r="15" fill="#000" />
                <circle cx="16" cy="9" r="2.6" fill="#808080" />
                <path d="M16 15V23" stroke="#808080" strokeWidth="4.6" strokeLinecap="round" />
              </svg>
            </Attribution>
          </MapPane>
        </Workspace>

        <DialogShade />
        <Dialog>
          <DialogHeader>
            <DialogTitle>Style Settings</DialogTitle>
            <CloseButton aria-label="Close">
              <svg width="17" height="17" viewBox="0 0 17 17">
                <path d="M1.5 1.5L15.5 15.5M15.5 1.5L1.5 15.5" stroke="#fff" strokeWidth="2.4" />
              </svg>
            </CloseButton>
          </DialogHeader>
          <DialogBody>
            {settings.map((item, i) => <SettingRow key={i} item={item} />)}
          </DialogBody>
          <ScrollThumb />
        </Dialog>

        <Highlight $x={2233} $y={4} $w={74} $h={66} />
        <StepBadge $x={2346} $y={45}>2</StepBadge>
        <Highlight $x={1903} $y={370} $w={379} $h={59} />
        <StepBadge $x={2322} $y={399}>1</StepBadge>
      </Shell>
    </>
  );
}
